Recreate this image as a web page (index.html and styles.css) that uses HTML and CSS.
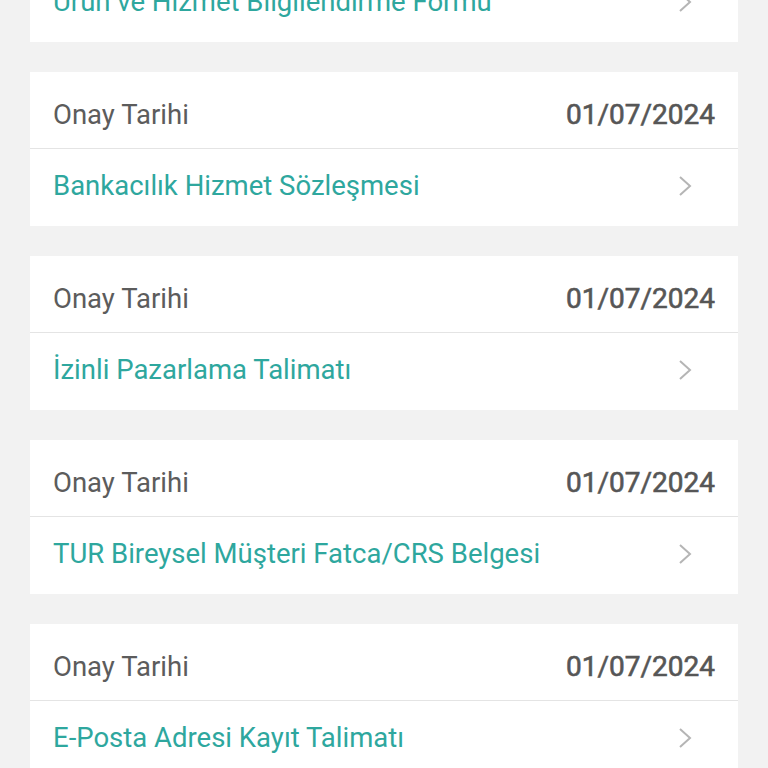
FILE: index.html
```html
<!DOCTYPE html>
<html lang="tr">
<head>
  <meta charset="UTF-8" />
  <meta name="viewport" content="width=device-width, initial-scale=1" />
  <title>Onaylı Belgeler</title>
  <link rel="stylesheet" href="styles.css">
</head>
<body>
  <div class="doc-list">

    <!-- scrolled past: only the link row is still visible -->
    <div class="doc-card partial">
      <a class="doc-link" href="#">
        <span class="doc-name">Ürün ve Hizmet Bilgilendirme Formu</span>
        <svg class="chevron" viewBox="0 0 14 22" width="14" height="22"><path d="M2 2 L12 11 L2 20" /></svg>
      </a>
    </div>

    <div class="doc-card">
      <div class="doc-head">
        <span class="doc-label">Onay Tarihi</span>
        <span class="doc-date">01/07/2024</span>
      </div>
      <a class="doc-link" href="#">
        <span class="doc-name">Bankacılık Hizmet Sözleşmesi</span>
        <svg class="chevron" viewBox="0 0 14 22" width="14" height="22"><path d="M2 2 L12 11 L2 20" /></svg>
      </a>
    </div>

    <div class="doc-card">
      <div class="doc-head">
        <span class="doc-label">Onay Tarihi</span>
        <span class="doc-date">01/07/2024</span>
      </div>
      <a class="doc-link" href="#">
        <span class="doc-name">İzinli Pazarlama Talimatı</span>
        <svg class="chevron" viewBox="0 0 14 22" width="14" height="22"><path d="M2 2 L12 11 L2 20" /></svg>
      </a>
    </div>

    <div class="doc-card">
      <div class="doc-head">
        <span class="doc-label">Onay Tarihi</span>
        <span class="doc-date">01/07/2024</span>
      </div>
      <a class="doc-link" href="#">
        <span class="doc-name">TUR Bireysel Müşteri Fatca/CRS Belgesi</span>
        <svg class="chevron" viewBox="0 0 14 22" width="14" height="22"><path d="M2 2 L12 11 L2 20" /></svg>
      </a>
    </div>

    <div class="doc-card">
      <div class="doc-head">
        <span class="doc-label">Onay Tarihi</span>
        <span class="doc-date">01/07/2024</span>
      </div>
      <a class="doc-link" href="#">
        <span class="doc-name">E-Posta Adresi Kayıt Talimatı</span>
        <svg class="chevron" viewBox="0 0 14 22" width="14" height="22"><path d="M2 2 L12 11 L2 20" /></svg>
      </a>
    </div>

  </div>
</body>
</html>
```

FILE: styles.css
```css
body {
  margin: 0;
  background: #f2f2f2;
  font-family: Roboto, "Noto Sans", sans-serif;
  overflow: hidden;
}

.doc-list {
  display: flex;
  flex-direction: column;
  gap: 30px;
  padding: 0 30px;
  margin-top: -35px;
}

.doc-card {
  background: #fff;
}

.doc-head {
  display: flex;
  justify-content: space-between;
  align-items: flex-start;
  height: 76px;
  padding: 0 23px;
  border-bottom: 1px solid #e4e4e4;
  font-size: 27.5px;
  line-height: 32px;
}

.doc-head span {
  padding-top: 27px;
}

.doc-label {
  color: #5c5c5c;
}

.doc-date {
  color: #565656;
  font-size: 28px;
  -webkit-text-stroke: 0.6px #565656;
}

.doc-link {
  display: flex;
  align-items: center;
  height: 77px;
  padding: 0 46px 0 23px;
  text-decoration: none;
}

.doc-name {
  flex: 1;
  color: #2ea79e;
  font-size: 27.5px;
  line-height: 32px;
  margin-top: -4px;
}

.chevron {
  fill: none;
  stroke: #b5b5b5;
  stroke-width: 2;
  margin-top: -4px;
}
```
